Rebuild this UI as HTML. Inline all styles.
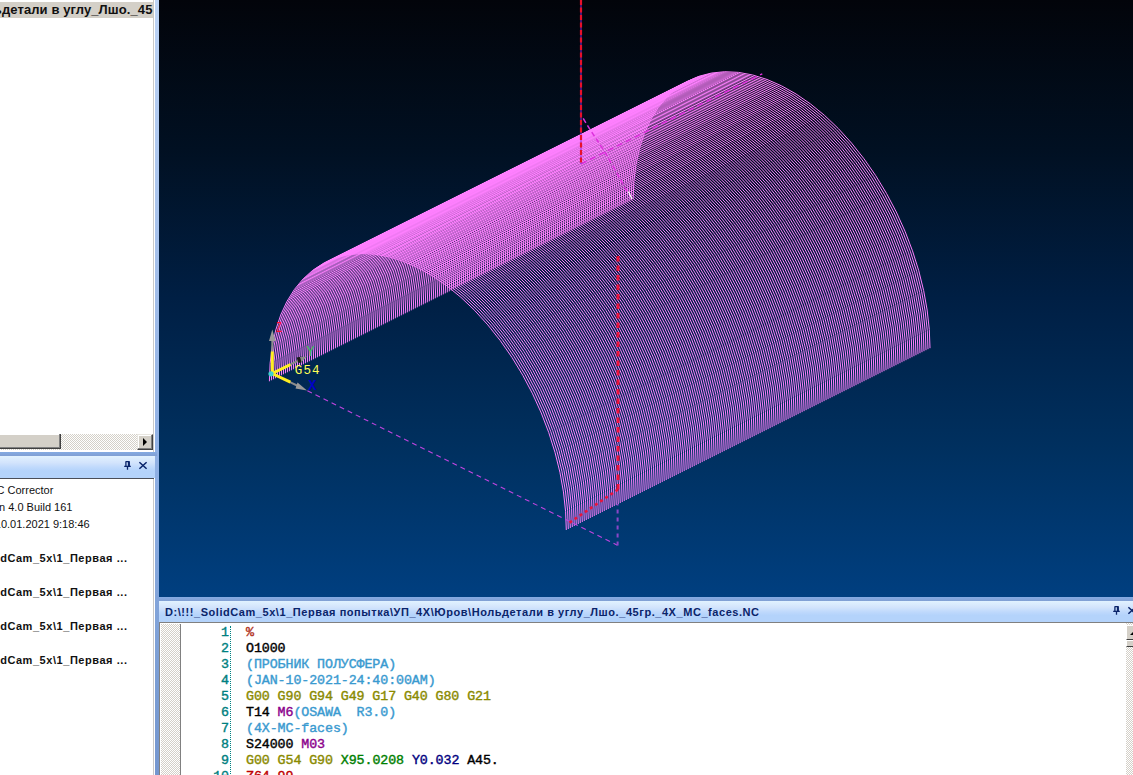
<!DOCTYPE html>
<html><head><meta charset="utf-8"><title>NC Corrector</title>
<style>
html,body{margin:0;padding:0;}
body{width:1133px;height:775px;overflow:hidden;position:relative;background:#fff;font-family:"Liberation Sans","DejaVu Sans",sans-serif;font-size:11px;color:#000;}
.abs{position:absolute;}
#left{left:0;top:0;width:153px;height:775px;background:#fff;}
#lhead{left:0;top:2px;width:153px;height:16px;background:#d4d0c8;overflow:hidden;}
#lhead span{position:absolute;right:0.5px;top:0;font-weight:bold;font-size:13px;line-height:16px;letter-spacing:0.1px;white-space:nowrap;color:#111;}
#lborder{left:153px;top:0;width:1px;height:775px;background:#c9c9c9;}
#vsplit{left:155px;top:0;width:4px;height:775px;background:linear-gradient(#bcd3f5 0%,#aac4ec 27%,#8fb0e4 60%,#789bd2 90%,#7496cf 100%);}
#hscroll{left:0;top:434px;width:153px;height:16px;background-color:#e9e7e2;background-image:conic-gradient(#fff 25%,#d4d0c8 0 50%,#fff 0 75%,#d4d0c8 0);background-size:2px 2px;}
#thumb{left:0;top:0;width:60px;height:14px;background:#d4d0c8;border-right:1px solid #404040;border-bottom:1px solid #404040;box-shadow:inset -1px -1px 0 #808080,inset 0 1px 0 #fff;}
#rbtn{left:137px;top:0;width:14px;height:14px;background:#d4d0c8;border:1px solid;border-color:#e8e6e0 #404040 #404040 #e8e6e0;box-shadow:inset -1px -1px 0 #808080,inset 1px 1px 0 #fff;}
#rbtn:after{content:"";position:absolute;left:5px;top:3px;border-left:4px solid #000;border-top:4px solid transparent;border-bottom:4px solid transparent;}
#hsplit{left:0;top:452px;width:157px;height:4px;z-index:3;background:linear-gradient(#84abe3,#819fd3);}
#phead{left:0;top:456px;width:155px;height:21.6px;z-index:3;background:linear-gradient(#e1f2ff 0%,#d3e4fc 30%,#bfd9fc 52%,#b4d3fb 68%,#b4d3fb 100%);}
#pline{left:0;top:477.5px;width:153.5px;height:1.4px;background:#4a4e58;z-index:3;}
.ptxt{left:0;white-space:nowrap;font-size:11px;line-height:13px;color:#111;}
.pb{font-weight:bold;letter-spacing:0.55px;}
#view{left:159px;top:0;width:974px;height:597px;background:linear-gradient(#02040a 0%,#011022 25%,#001f44 50%,#00305f 75%,#003f80 100%);overflow:hidden;}
#bsplit{left:159px;top:597px;width:974px;height:4px;background:linear-gradient(#84abe3,#819fd3);}
#bhead{left:159px;top:601px;width:974px;height:21px;background:linear-gradient(#e1f2ff 0%,#d3e4fc 30%,#bfd9fc 52%,#b4d3fb 68%,#b4d3fb 100%);}
#btitle{left:6px;top:4px;font-weight:bold;font-size:11px;line-height:14px;letter-spacing:0.555px;color:#0a246a;white-space:nowrap;}
#editor{left:159px;top:622px;width:974px;height:153px;background:#fff;border-top:1px solid #808080;border-left:1px solid #808080;box-sizing:border-box;overflow:hidden;}
#margin{left:1px;top:1px;width:19px;height:153px;background-color:#e9e7e2;background-image:conic-gradient(#fff 25%,#d4d0c8 0 50%,#fff 0 75%,#d4d0c8 0);background-size:2px 2px;border-right:1px solid #808080;}
#dots{left:70px;top:3px;width:0;height:150px;border-left:1px dotted #008080;}
.ln{left:0;width:69px;text-align:right;color:#008080;}
.cl,.ln{font-family:"Liberation Mono","DejaVu Sans Mono",monospace;font-weight:normal;-webkit-text-stroke:0.4px currentColor;letter-spacing:-0.1px;font-size:13.33px;line-height:16px;height:16px;white-space:pre;}
.cl{left:86px;}
.cm{color:#3a9ad0;} .g{color:#8a8a00;} .m{color:#8b008b;} .x{color:#008000;} .y{color:#000080;} .z{color:#c00000;} .p{color:#b03020;}
#vscroll{left:966px;top:0px;width:7px;height:152px;background-color:#e9e7e2;background-image:conic-gradient(#fff 25%,#d4d0c8 0 50%,#fff 0 75%,#d4d0c8 0);background-size:2px 2px;}
#ubtn{left:0;top:2px;width:16px;height:13px;background:#d4d0c8;border-left:1px solid #fff;border-top:1px solid #fff;border-bottom:1px solid #404040;}
#ubtn:after{content:"";position:absolute;left:3px;top:5px;border-bottom:4px solid #000;border-left:4px solid transparent;border-right:4px solid transparent;}
#vthumb{left:0;top:17px;width:16px;height:5px;background:#d4d0c8;border-left:1px solid #fff;border-top:1px solid #fff;border-bottom:1px solid #404040;}
</style></head><body>
<div id="left" class="abs"></div>
<div id="lhead" class="abs"><span>Нольдетали в углу_Лшо._45</span></div>
<div id="hscroll" class="abs"><div id="thumb" class="abs"></div><div id="rbtn" class="abs"></div></div>
<div id="hsplit" class="abs"></div>
<div id="phead" class="abs">
<svg class="abs" style="left:122px;top:4px" width="28" height="12" viewBox="0 0 28 12"><g fill="none" stroke="#0a246a" stroke-width="1.3"><path d="M3.5 1.7h4.2M3.9 1.7v4.6M7.3 1.7v4.6M6.5 1.7v4.6M2.2 6.4h6.6M5.5 6.4v3.4"/><path d="M17.4 2.2l7.2 6.6M24.6 2.2l-7.2 6.6" stroke-width="1.5"/></g></svg>
</div>
<div id="pline" class="abs"></div>
<div class="abs ptxt" style="top:484px;left:-11.4px">NC Corrector</div>
<div class="abs ptxt" style="top:501px;left:-31.5px">Version 4.0 Build 161</div>
<div class="abs ptxt" style="top:518px;left:-5.2px">10.01.2021 9:18:46</div>
<div class="abs ptxt pb" style="top:552px;left:-22.2px">SolidCam_5x\1_Первая ...</div>
<div class="abs ptxt pb" style="top:586px;left:-22.2px">SolidCam_5x\1_Первая ...</div>
<div class="abs ptxt pb" style="top:620px;left:-22.2px">SolidCam_5x\1_Первая ...</div>
<div class="abs ptxt pb" style="top:654px;left:-22.2px">SolidCam_5x\1_Первая ...</div>
<div id="lborder" class="abs"></div>
<div id="vsplit" class="abs"></div>
<div id="view" class="abs">
<svg class="abs" style="left:0;top:0" width="974" height="597" viewBox="0 0 974 597">
<path fill="none" stroke="#ff80ff" stroke-width="1" d="M407.30 530.00a214.39 130.18 65.24 0 0 -148.45 -262.35a214.39 130.18 65.24 0 0 -148.45 113.65M409.30 529.00a214.39 130.18 65.24 0 0 -148.45 -262.35a214.39 130.18 65.24 0 0 -148.45 113.65M411.30 528.00a214.39 130.18 65.24 0 0 -148.45 -262.35a214.39 130.18 65.24 0 0 -148.45 113.65M413.30 527.00a214.39 130.18 65.24 0 0 -148.45 -262.35a214.39 130.18 65.24 0 0 -148.45 113.65M415.29 526.00a214.39 130.18 65.24 0 0 -148.45 -262.35a214.39 130.18 65.24 0 0 -148.45 113.65M417.29 525.01a214.39 130.18 65.24 0 0 -148.45 -262.35a214.39 130.18 65.24 0 0 -148.45 113.65M419.29 524.01a214.39 130.18 65.24 0 0 -148.45 -262.35a214.39 130.18 65.24 0 0 -148.45 113.65M421.29 523.01a214.39 130.18 65.24 0 0 -148.45 -262.35a214.39 130.18 65.24 0 0 -148.45 113.65M423.29 522.01a214.39 130.18 65.24 0 0 -148.45 -262.35a214.39 130.18 65.24 0 0 -148.45 113.65M425.29 521.01a214.39 130.18 65.24 0 0 -148.45 -262.35a214.39 130.18 65.24 0 0 -148.45 113.65M427.28 520.01a214.39 130.18 65.24 0 0 -148.45 -262.35a214.39 130.18 65.24 0 0 -148.45 113.65M429.28 519.01a214.39 130.18 65.24 0 0 -148.45 -262.35a214.39 130.18 65.24 0 0 -148.45 113.65M431.28 518.01a214.39 130.18 65.24 0 0 -148.45 -262.35a214.39 130.18 65.24 0 0 -148.45 113.65M433.28 517.01a214.39 130.18 65.24 0 0 -148.45 -262.35a214.39 130.18 65.24 0 0 -148.45 113.65M435.28 516.02a214.39 130.18 65.24 0 0 -148.45 -262.35a214.39 130.18 65.24 0 0 -148.45 113.65M437.28 515.02a214.39 130.18 65.24 0 0 -148.45 -262.35a214.39 130.18 65.24 0 0 -148.45 113.65M439.27 514.02a214.39 130.18 65.24 0 0 -148.45 -262.35a214.39 130.18 65.24 0 0 -148.45 113.65M441.27 513.02a214.39 130.18 65.24 0 0 -148.45 -262.35a214.39 130.18 65.24 0 0 -148.45 113.65M443.27 512.02a214.39 130.18 65.24 0 0 -148.45 -262.35a214.39 130.18 65.24 0 0 -148.45 113.65M445.27 511.02a214.39 130.18 65.24 0 0 -148.45 -262.35a214.39 130.18 65.24 0 0 -148.45 113.65M447.27 510.02a214.39 130.18 65.24 0 0 -148.45 -262.35a214.39 130.18 65.24 0 0 -148.45 113.65M449.27 509.02a214.39 130.18 65.24 0 0 -148.45 -262.35a214.39 130.18 65.24 0 0 -148.45 113.65M451.26 508.02a214.39 130.18 65.24 0 0 -148.45 -262.35a214.39 130.18 65.24 0 0 -148.45 113.65M453.26 507.03a214.39 130.18 65.24 0 0 -148.45 -262.35a214.39 130.18 65.24 0 0 -148.45 113.65M455.26 506.03a214.39 130.18 65.24 0 0 -148.45 -262.35a214.39 130.18 65.24 0 0 -148.45 113.65M457.26 505.03a214.39 130.18 65.24 0 0 -148.45 -262.35a214.39 130.18 65.24 0 0 -148.45 113.65M459.26 504.03a214.39 130.18 65.24 0 0 -148.45 -262.35a214.39 130.18 65.24 0 0 -148.45 113.65M461.26 503.03a214.39 130.18 65.24 0 0 -148.45 -262.35a214.39 130.18 65.24 0 0 -148.45 113.65M463.25 502.03a214.39 130.18 65.24 0 0 -148.45 -262.35a214.39 130.18 65.24 0 0 -148.45 113.65M465.25 501.03a214.39 130.18 65.24 0 0 -148.45 -262.35a214.39 130.18 65.24 0 0 -148.45 113.65M467.25 500.03a214.39 130.18 65.24 0 0 -148.45 -262.35a214.39 130.18 65.24 0 0 -148.45 113.65M469.25 499.03a214.39 130.18 65.24 0 0 -148.45 -262.35a214.39 130.18 65.24 0 0 -148.45 113.65M471.25 498.04a214.39 130.18 65.24 0 0 -148.45 -262.35a214.39 130.18 65.24 0 0 -148.45 113.65M473.25 497.04a214.39 130.18 65.24 0 0 -148.45 -262.35a214.39 130.18 65.24 0 0 -148.45 113.65M475.24 496.04a214.39 130.18 65.24 0 0 -148.45 -262.35a214.39 130.18 65.24 0 0 -148.45 113.65M477.24 495.04a214.39 130.18 65.24 0 0 -148.45 -262.35a214.39 130.18 65.24 0 0 -148.45 113.65M479.24 494.04a214.39 130.18 65.24 0 0 -148.45 -262.35a214.39 130.18 65.24 0 0 -148.45 113.65M481.24 493.04a214.39 130.18 65.24 0 0 -148.45 -262.35a214.39 130.18 65.24 0 0 -148.45 113.65M483.24 492.04a214.39 130.18 65.24 0 0 -148.45 -262.35a214.39 130.18 65.24 0 0 -148.45 113.65M485.24 491.04a214.39 130.18 65.24 0 0 -148.45 -262.35a214.39 130.18 65.24 0 0 -148.45 113.65M487.23 490.04a214.39 130.18 65.24 0 0 -148.45 -262.35a214.39 130.18 65.24 0 0 -148.45 113.65M489.23 489.05a214.39 130.18 65.24 0 0 -148.45 -262.35a214.39 130.18 65.24 0 0 -148.45 113.65M491.23 488.05a214.39 130.18 65.24 0 0 -148.45 -262.35a214.39 130.18 65.24 0 0 -148.45 113.65M493.23 487.05a214.39 130.18 65.24 0 0 -148.45 -262.35a214.39 130.18 65.24 0 0 -148.45 113.65M495.23 486.05a214.39 130.18 65.24 0 0 -148.45 -262.35a214.39 130.18 65.24 0 0 -148.45 113.65M497.23 485.05a214.39 130.18 65.24 0 0 -148.45 -262.35a214.39 130.18 65.24 0 0 -148.45 113.65M499.22 484.05a214.39 130.18 65.24 0 0 -148.45 -262.35a214.39 130.18 65.24 0 0 -148.45 113.65M501.22 483.05a214.39 130.18 65.24 0 0 -148.45 -262.35a214.39 130.18 65.24 0 0 -148.45 113.65M503.22 482.05a214.39 130.18 65.24 0 0 -148.45 -262.35a214.39 130.18 65.24 0 0 -148.45 113.65M505.22 481.05a214.39 130.18 65.24 0 0 -148.45 -262.35a214.39 130.18 65.24 0 0 -148.45 113.65M507.22 480.05a214.39 130.18 65.24 0 0 -148.45 -262.35a214.39 130.18 65.24 0 0 -148.45 113.65M509.22 479.06a214.39 130.18 65.24 0 0 -148.45 -262.35a214.39 130.18 65.24 0 0 -148.45 113.65M511.21 478.06a214.39 130.18 65.24 0 0 -148.45 -262.35a214.39 130.18 65.24 0 0 -148.45 113.65M513.21 477.06a214.39 130.18 65.24 0 0 -148.45 -262.35a214.39 130.18 65.24 0 0 -148.45 113.65M515.21 476.06a214.39 130.18 65.24 0 0 -148.45 -262.35a214.39 130.18 65.24 0 0 -148.45 113.65M517.21 475.06a214.39 130.18 65.24 0 0 -148.45 -262.35a214.39 130.18 65.24 0 0 -148.45 113.65M519.21 474.06a214.39 130.18 65.24 0 0 -148.45 -262.35a214.39 130.18 65.24 0 0 -148.45 113.65M521.21 473.06a214.39 130.18 65.24 0 0 -148.45 -262.35a214.39 130.18 65.24 0 0 -148.45 113.65M523.20 472.06a214.39 130.18 65.24 0 0 -148.45 -262.35a214.39 130.18 65.24 0 0 -148.45 113.65M525.20 471.06a214.39 130.18 65.24 0 0 -148.45 -262.35a214.39 130.18 65.24 0 0 -148.45 113.65M527.20 470.07a214.39 130.18 65.24 0 0 -148.45 -262.35a214.39 130.18 65.24 0 0 -148.45 113.65M529.20 469.07a214.39 130.18 65.24 0 0 -148.45 -262.35a214.39 130.18 65.24 0 0 -148.45 113.65M531.20 468.07a214.39 130.18 65.24 0 0 -148.45 -262.35a214.39 130.18 65.24 0 0 -148.45 113.65M533.20 467.07a214.39 130.18 65.24 0 0 -148.45 -262.35a214.39 130.18 65.24 0 0 -148.45 113.65M535.19 466.07a214.39 130.18 65.24 0 0 -148.45 -262.35a214.39 130.18 65.24 0 0 -148.45 113.65M537.19 465.07a214.39 130.18 65.24 0 0 -148.45 -262.35a214.39 130.18 65.24 0 0 -148.45 113.65M539.19 464.07a214.39 130.18 65.24 0 0 -148.45 -262.35a214.39 130.18 65.24 0 0 -148.45 113.65M541.19 463.07a214.39 130.18 65.24 0 0 -148.45 -262.35a214.39 130.18 65.24 0 0 -148.45 113.65M543.19 462.07a214.39 130.18 65.24 0 0 -148.45 -262.35a214.39 130.18 65.24 0 0 -148.45 113.65M545.19 461.08a214.39 130.18 65.24 0 0 -148.45 -262.35a214.39 130.18 65.24 0 0 -148.45 113.65M547.18 460.08a214.39 130.18 65.24 0 0 -148.45 -262.35a214.39 130.18 65.24 0 0 -148.45 113.65M549.18 459.08a214.39 130.18 65.24 0 0 -148.45 -262.35a214.39 130.18 65.24 0 0 -148.45 113.65M551.18 458.08a214.39 130.18 65.24 0 0 -148.45 -262.35a214.39 130.18 65.24 0 0 -148.45 113.65M553.18 457.08a214.39 130.18 65.24 0 0 -148.45 -262.35a214.39 130.18 65.24 0 0 -148.45 113.65M555.18 456.08a214.39 130.18 65.24 0 0 -148.45 -262.35a214.39 130.18 65.24 0 0 -148.45 113.65M557.18 455.08a214.39 130.18 65.24 0 0 -148.45 -262.35a214.39 130.18 65.24 0 0 -148.45 113.65M559.17 454.08a214.39 130.18 65.24 0 0 -148.45 -262.35a214.39 130.18 65.24 0 0 -148.45 113.65M561.17 453.08a214.39 130.18 65.24 0 0 -148.45 -262.35a214.39 130.18 65.24 0 0 -148.45 113.65M563.17 452.09a214.39 130.18 65.24 0 0 -148.45 -262.35a214.39 130.18 65.24 0 0 -148.45 113.65M565.17 451.09a214.39 130.18 65.24 0 0 -148.45 -262.35a214.39 130.18 65.24 0 0 -148.45 113.65M567.17 450.09a214.39 130.18 65.24 0 0 -148.45 -262.35a214.39 130.18 65.24 0 0 -148.45 113.65M569.17 449.09a214.39 130.18 65.24 0 0 -148.45 -262.35a214.39 130.18 65.24 0 0 -148.45 113.65M571.16 448.09a214.39 130.18 65.24 0 0 -148.45 -262.35a214.39 130.18 65.24 0 0 -148.45 113.65M573.16 447.09a214.39 130.18 65.24 0 0 -148.45 -262.35a214.39 130.18 65.24 0 0 -148.45 113.65M575.16 446.09a214.39 130.18 65.24 0 0 -148.45 -262.35a214.39 130.18 65.24 0 0 -148.45 113.65M577.16 445.09a214.39 130.18 65.24 0 0 -148.45 -262.35a214.39 130.18 65.24 0 0 -148.45 113.65M579.16 444.09a214.39 130.18 65.24 0 0 -148.45 -262.35a214.39 130.18 65.24 0 0 -148.45 113.65M581.16 443.10a214.39 130.18 65.24 0 0 -148.45 -262.35a214.39 130.18 65.24 0 0 -148.45 113.65M583.15 442.10a214.39 130.18 65.24 0 0 -148.45 -262.35a214.39 130.18 65.24 0 0 -148.45 113.65M585.15 441.10a214.39 130.18 65.24 0 0 -148.45 -262.35a214.39 130.18 65.24 0 0 -148.45 113.65M587.15 440.10a214.39 130.18 65.24 0 0 -148.45 -262.35a214.39 130.18 65.24 0 0 -148.45 113.65M589.15 439.10a214.39 130.18 65.24 0 0 -148.45 -262.35a214.39 130.18 65.24 0 0 -148.45 113.65M591.15 438.10a214.39 130.18 65.24 0 0 -148.45 -262.35a214.39 130.18 65.24 0 0 -148.45 113.65M593.15 437.10a214.39 130.18 65.24 0 0 -148.45 -262.35a214.39 130.18 65.24 0 0 -148.45 113.65M595.15 436.10a214.39 130.18 65.24 0 0 -148.45 -262.35a214.39 130.18 65.24 0 0 -148.45 113.65M597.14 435.10a214.39 130.18 65.24 0 0 -148.45 -262.35a214.39 130.18 65.24 0 0 -148.45 113.65M599.14 434.11a214.39 130.18 65.24 0 0 -148.45 -262.35a214.39 130.18 65.24 0 0 -148.45 113.65M601.14 433.11a214.39 130.18 65.24 0 0 -148.45 -262.35a214.39 130.18 65.24 0 0 -148.45 113.65M603.14 432.11a214.39 130.18 65.24 0 0 -148.45 -262.35a214.39 130.18 65.24 0 0 -148.45 113.65M605.14 431.11a214.39 130.18 65.24 0 0 -148.45 -262.35a214.39 130.18 65.24 0 0 -148.45 113.65M607.14 430.11a214.39 130.18 65.24 0 0 -148.45 -262.35a214.39 130.18 65.24 0 0 -148.45 113.65M609.13 429.11a214.39 130.18 65.24 0 0 -148.45 -262.35a214.39 130.18 65.24 0 0 -148.45 113.65M611.13 428.11a214.39 130.18 65.24 0 0 -148.45 -262.35a214.39 130.18 65.24 0 0 -148.45 113.65M613.13 427.11a214.39 130.18 65.24 0 0 -148.45 -262.35a214.39 130.18 65.24 0 0 -148.45 113.65M615.13 426.11a214.39 130.18 65.24 0 0 -148.45 -262.35a214.39 130.18 65.24 0 0 -148.45 113.65M617.13 425.12a214.39 130.18 65.24 0 0 -148.45 -262.35a214.39 130.18 65.24 0 0 -148.45 113.65M619.13 424.12a214.39 130.18 65.24 0 0 -148.45 -262.35a214.39 130.18 65.24 0 0 -148.45 113.65M621.12 423.12a214.39 130.18 65.24 0 0 -148.45 -262.35a214.39 130.18 65.24 0 0 -148.45 113.65M623.12 422.12a214.39 130.18 65.24 0 0 -148.45 -262.35a214.39 130.18 65.24 0 0 -148.45 113.65M625.12 421.12a214.39 130.18 65.24 0 0 -148.45 -262.35a214.39 130.18 65.24 0 0 -148.45 113.65M627.12 420.12a214.39 130.18 65.24 0 0 -148.45 -262.35a214.39 130.18 65.24 0 0 -148.45 113.65M629.12 419.12a214.39 130.18 65.24 0 0 -148.45 -262.35a214.39 130.18 65.24 0 0 -148.45 113.65M631.12 418.12a214.39 130.18 65.24 0 0 -148.45 -262.35a214.39 130.18 65.24 0 0 -148.45 113.65M633.11 417.12a214.39 130.18 65.24 0 0 -148.45 -262.35a214.39 130.18 65.24 0 0 -148.45 113.65M635.11 416.13a214.39 130.18 65.24 0 0 -148.45 -262.35a214.39 130.18 65.24 0 0 -148.45 113.65M637.11 415.13a214.39 130.18 65.24 0 0 -148.45 -262.35a214.39 130.18 65.24 0 0 -148.45 113.65M639.11 414.13a214.39 130.18 65.24 0 0 -148.45 -262.35a214.39 130.18 65.24 0 0 -148.45 113.65M641.11 413.13a214.39 130.18 65.24 0 0 -148.45 -262.35a214.39 130.18 65.24 0 0 -148.45 113.65M643.11 412.13a214.39 130.18 65.24 0 0 -148.45 -262.35a214.39 130.18 65.24 0 0 -148.45 113.65M645.10 411.13a214.39 130.18 65.24 0 0 -148.45 -262.35a214.39 130.18 65.24 0 0 -148.45 113.65M647.10 410.13a214.39 130.18 65.24 0 0 -148.45 -262.35a214.39 130.18 65.24 0 0 -148.45 113.65M649.10 409.13a214.39 130.18 65.24 0 0 -148.45 -262.35a214.39 130.18 65.24 0 0 -148.45 113.65M651.10 408.13a214.39 130.18 65.24 0 0 -148.45 -262.35a214.39 130.18 65.24 0 0 -148.45 113.65M653.10 407.14a214.39 130.18 65.24 0 0 -148.45 -262.35a214.39 130.18 65.24 0 0 -148.45 113.65M655.10 406.14a214.39 130.18 65.24 0 0 -148.45 -262.35a214.39 130.18 65.24 0 0 -148.45 113.65M657.09 405.14a214.39 130.18 65.24 0 0 -148.45 -262.35a214.39 130.18 65.24 0 0 -148.45 113.65M659.09 404.14a214.39 130.18 65.24 0 0 -148.45 -262.35a214.39 130.18 65.24 0 0 -148.45 113.65M661.09 403.14a214.39 130.18 65.24 0 0 -148.45 -262.35a214.39 130.18 65.24 0 0 -148.45 113.65M663.09 402.14a214.39 130.18 65.24 0 0 -148.45 -262.35a214.39 130.18 65.24 0 0 -148.45 113.65M665.09 401.14a214.39 130.18 65.24 0 0 -148.45 -262.35a214.39 130.18 65.24 0 0 -148.45 113.65M667.09 400.14a214.39 130.18 65.24 0 0 -148.45 -262.35a214.39 130.18 65.24 0 0 -148.45 113.65M669.08 399.14a214.39 130.18 65.24 0 0 -148.45 -262.35a214.39 130.18 65.24 0 0 -148.45 113.65M671.08 398.15a214.39 130.18 65.24 0 0 -148.45 -262.35a214.39 130.18 65.24 0 0 -148.45 113.65M673.08 397.15a214.39 130.18 65.24 0 0 -148.45 -262.35a214.39 130.18 65.24 0 0 -148.45 113.65M675.08 396.15a214.39 130.18 65.24 0 0 -148.45 -262.35a214.39 130.18 65.24 0 0 -148.45 113.65M677.08 395.15a214.39 130.18 65.24 0 0 -148.45 -262.35a214.39 130.18 65.24 0 0 -148.45 113.65M679.08 394.15a214.39 130.18 65.24 0 0 -148.45 -262.35a214.39 130.18 65.24 0 0 -148.45 113.65M681.07 393.15a214.39 130.18 65.24 0 0 -148.45 -262.35a214.39 130.18 65.24 0 0 -148.45 113.65M683.07 392.15a214.39 130.18 65.24 0 0 -148.45 -262.35a214.39 130.18 65.24 0 0 -148.45 113.65M685.07 391.15a214.39 130.18 65.24 0 0 -148.45 -262.35a214.39 130.18 65.24 0 0 -148.45 113.65M687.07 390.15a214.39 130.18 65.24 0 0 -148.45 -262.35a214.39 130.18 65.24 0 0 -148.45 113.65M689.07 389.15a214.39 130.18 65.24 0 0 -148.45 -262.35a214.39 130.18 65.24 0 0 -148.45 113.65M691.07 388.16a214.39 130.18 65.24 0 0 -148.45 -262.35a214.39 130.18 65.24 0 0 -148.45 113.65M693.06 387.16a214.39 130.18 65.24 0 0 -148.45 -262.35a214.39 130.18 65.24 0 0 -148.45 113.65M695.06 386.16a214.39 130.18 65.24 0 0 -148.45 -262.35a214.39 130.18 65.24 0 0 -148.45 113.65M697.06 385.16a214.39 130.18 65.24 0 0 -148.45 -262.35a214.39 130.18 65.24 0 0 -148.45 113.65M699.06 384.16a214.39 130.18 65.24 0 0 -148.45 -262.35a214.39 130.18 65.24 0 0 -148.45 113.65M701.06 383.16a214.39 130.18 65.24 0 0 -148.45 -262.35a214.39 130.18 65.24 0 0 -148.45 113.65M703.06 382.16a214.39 130.18 65.24 0 0 -148.45 -262.35a214.39 130.18 65.24 0 0 -148.45 113.65M705.05 381.16a214.39 130.18 65.24 0 0 -148.45 -262.35a214.39 130.18 65.24 0 0 -148.45 113.65M707.05 380.16a214.39 130.18 65.24 0 0 -148.45 -262.35a214.39 130.18 65.24 0 0 -148.45 113.65M709.05 379.17a214.39 130.18 65.24 0 0 -148.45 -262.35a214.39 130.18 65.24 0 0 -148.45 113.65M711.05 378.17a214.39 130.18 65.24 0 0 -148.45 -262.35a214.39 130.18 65.24 0 0 -148.45 113.65M713.05 377.17a214.39 130.18 65.24 0 0 -148.45 -262.35a214.39 130.18 65.24 0 0 -148.45 113.65M715.05 376.17a214.39 130.18 65.24 0 0 -148.45 -262.35a214.39 130.18 65.24 0 0 -148.45 113.65M717.04 375.17a214.39 130.18 65.24 0 0 -148.45 -262.35a214.39 130.18 65.24 0 0 -148.45 113.65M719.04 374.17a214.39 130.18 65.24 0 0 -148.45 -262.35a214.39 130.18 65.24 0 0 -148.45 113.65M721.04 373.17a214.39 130.18 65.24 0 0 -148.45 -262.35a214.39 130.18 65.24 0 0 -148.45 113.65M723.04 372.17a214.39 130.18 65.24 0 0 -148.45 -262.35a214.39 130.18 65.24 0 0 -148.45 113.65M725.04 371.17a214.39 130.18 65.24 0 0 -148.45 -262.35a214.39 130.18 65.24 0 0 -148.45 113.65M727.04 370.18a214.39 130.18 65.24 0 0 -148.45 -262.35a214.39 130.18 65.24 0 0 -148.45 113.65M729.03 369.18a214.39 130.18 65.24 0 0 -148.45 -262.35a214.39 130.18 65.24 0 0 -148.45 113.65M731.03 368.18a214.39 130.18 65.24 0 0 -148.45 -262.35a214.39 130.18 65.24 0 0 -148.45 113.65M733.03 367.18a214.39 130.18 65.24 0 0 -148.45 -262.35a214.39 130.18 65.24 0 0 -148.45 113.65M735.03 366.18a214.39 130.18 65.24 0 0 -148.45 -262.35a214.39 130.18 65.24 0 0 -148.45 113.65M737.03 365.18a214.39 130.18 65.24 0 0 -148.45 -262.35a214.39 130.18 65.24 0 0 -148.45 113.65M739.03 364.18a214.39 130.18 65.24 0 0 -148.45 -262.35a214.39 130.18 65.24 0 0 -148.45 113.65M741.02 363.18a214.39 130.18 65.24 0 0 -148.45 -262.35a214.39 130.18 65.24 0 0 -148.45 113.65M743.02 362.18a214.39 130.18 65.24 0 0 -148.45 -262.35a214.39 130.18 65.24 0 0 -148.45 113.65M745.02 361.19a214.39 130.18 65.24 0 0 -148.45 -262.35a214.39 130.18 65.24 0 0 -148.45 113.65M747.02 360.19a214.39 130.18 65.24 0 0 -148.45 -262.35a214.39 130.18 65.24 0 0 -148.45 113.65M749.02 359.19a214.39 130.18 65.24 0 0 -148.45 -262.35a214.39 130.18 65.24 0 0 -148.45 113.65M751.02 358.19a214.39 130.18 65.24 0 0 -148.45 -262.35a214.39 130.18 65.24 0 0 -148.45 113.65M753.01 357.19a214.39 130.18 65.24 0 0 -148.45 -262.35a214.39 130.18 65.24 0 0 -148.45 113.65M755.01 356.19a214.39 130.18 65.24 0 0 -148.45 -262.35a214.39 130.18 65.24 0 0 -148.45 113.65M757.01 355.19a214.39 130.18 65.24 0 0 -148.45 -262.35a214.39 130.18 65.24 0 0 -148.45 113.65M759.01 354.19a214.39 130.18 65.24 0 0 -148.45 -262.35a214.39 130.18 65.24 0 0 -148.45 113.65M761.01 353.19a214.39 130.18 65.24 0 0 -148.45 -262.35a214.39 130.18 65.24 0 0 -148.45 113.65M763.01 352.20a214.39 130.18 65.24 0 0 -148.45 -262.35a214.39 130.18 65.24 0 0 -148.45 113.65M765.00 351.20a214.39 130.18 65.24 0 0 -148.45 -262.35a214.39 130.18 65.24 0 0 -148.45 113.65M767.00 350.20a214.39 130.18 65.24 0 0 -148.45 -262.35a214.39 130.18 65.24 0 0 -148.45 113.65M769.00 349.20a214.39 130.18 65.24 0 0 -148.45 -262.35a214.39 130.18 65.24 0 0 -148.45 113.65M771.00 348.20a214.39 130.18 65.24 0 0 -148.45 -262.35a214.39 130.18 65.24 0 0 -148.45 113.65"/>
<g fill="none" transform="translate(-159,0)">
<path d="M307.4 390.8L617.4 545.2" stroke="#c044e0" stroke-width="1.1" stroke-dasharray="5 4"/><path d="M617.6 545.5V504" stroke="#8a46c8" stroke-width="2" stroke-dasharray="4 4"/>
<path d="M581 164L762.3 73.8" stroke="#dc30dc" stroke-width="1.5" stroke-dasharray="6 4"/>
<path d="M583.2 118.3Q590 130 597 140T614 168T628 193" stroke="#dc30dc" stroke-width="1.5" stroke-dasharray="5 3"/>
<path d="M628.3 191.5L632 199" stroke="#fff" stroke-width="1.2"/>
<path d="M581 0V164" stroke="#8a2be2" stroke-width="1"/>
<path d="M581 0V164" stroke="#e8102a" stroke-width="2.2" stroke-dasharray="5 2.5"/>
<path d="M618 256V490" stroke="#e8143c" stroke-width="3" stroke-dasharray="5.5 4"/><path d="M618 489.5L569 523" stroke="#e8143c" stroke-width="2.6" stroke-dasharray="3 3.2"/>
<!-- axis icon -->
<g stroke-linecap="butt">
<path d="M272.3 352V336" stroke="#8c8c8c" stroke-width="2"/>
<path d="M272.3 329.5L275.6 341H269z" fill="#9a9a9a" stroke="none"/>
<path d="M290 364.6L299 360.3" stroke="#8c8c8c" stroke-width="2"/>
<path d="M296.5 357.5L302.5 356.5L301.5 362.5L298.5 363z" fill="#1c1c1c" stroke="none"/>
<path d="M307 356.5L300 357L301.5 362z" fill="#8a8a8a" stroke="none"/>
<path d="M290 382.2L298 386" stroke="#8c8c8c" stroke-width="2"/>
<path d="M307 390.5L297.5 382.5L295.5 388.5z" fill="#9a9a9a" stroke="none"/>
<path d="M272.3 374V351.5" stroke="#ffee22" stroke-width="3"/>
<path d="M272 373.5L290.4 364.6" stroke="#ffee22" stroke-width="3"/>
<path d="M272 373.5L290.4 382.2" stroke="#ffee22" stroke-width="3"/>
<circle cx="271" cy="373.8" r="2.6" fill="#3fd0d0" stroke="none"/>
</g>
</g>
<g font-family="'Liberation Mono','DejaVu Sans Mono',monospace" transform="translate(-159,0)">
<text x="276" y="331.5" font-size="14.5" fill="#ff1030" textLength="5.8" lengthAdjust="spacingAndGlyphs">Z</text>
<text x="306.2" y="355.7" font-size="14.5" fill="#3fbf5f" textLength="8.4" lengthAdjust="spacingAndGlyphs">Y</text>
<text x="308.2" y="389.8" font-size="14.5" font-weight="bold" fill="#0000c8" textLength="8.2" lengthAdjust="spacingAndGlyphs">X</text>
<text x="294.8" y="373.8" font-size="12.5" fill="#ffff55" textLength="24.8" lengthAdjust="spacing">G54</text>
</g>

</svg>
</div>
<div id="bsplit" class="abs"></div>
<div id="bhead" class="abs"><div id="btitle" class="abs">D:\!!!_SolidCam_5x\1_Первая попытка\УП_4Х\Юров\Нольдетали в углу_Лшо._45гр._4X_MC_faces.NC</div>
<svg class="abs" style="left:952px;top:4px" width="22" height="12" viewBox="0 0 22 12"><g fill="none" stroke="#0a246a" stroke-width="1.3"><path d="M3.5 1.7h4.2M3.9 1.7v4.6M7.3 1.7v4.6M6.5 1.7v4.6M2.2 6.4h6.6M5.5 6.4v3.4"/><path d="M17.4 2.2l7.2 6.6M24.6 2.2l-7.2 6.6" stroke-width="1.5"/></g></svg>
</div>
<div id="editor" class="abs">
<div id="margin" class="abs"></div>
<div id="dots" class="abs"></div>
<div class="abs ln" style="top:2px">1</div><div class="abs cl" style="top:2px"><span class="p">%</span></div>
<div class="abs ln" style="top:18px">2</div><div class="abs cl" style="top:18px">O1000</div>
<div class="abs ln" style="top:34px">3</div><div class="abs cl" style="top:34px"><span class="cm">(ПРОБНИК ПОЛУСФЕРА)</span></div>
<div class="abs ln" style="top:50px">4</div><div class="abs cl" style="top:50px"><span class="cm">(JAN-10-2021-24:40:00AM)</span></div>
<div class="abs ln" style="top:66px">5</div><div class="abs cl" style="top:66px"><span class="g">G00 G90 G94 G49 G17 G40 G80 G21</span></div>
<div class="abs ln" style="top:82px">6</div><div class="abs cl" style="top:82px">T14 <span class="m">M6</span><span class="cm">(OSAWA  R3.0)</span></div>
<div class="abs ln" style="top:98px">7</div><div class="abs cl" style="top:98px"><span class="cm">(4X-MC-faces)</span></div>
<div class="abs ln" style="top:114px">8</div><div class="abs cl" style="top:114px">S24000 <span class="m">M03</span></div>
<div class="abs ln" style="top:130px">9</div><div class="abs cl" style="top:130px"><span class="g">G00 G54 G90</span> <span class="x">X95.0208</span> <span class="y">Y0.032</span> A45.</div>
<div class="abs ln" style="top:146px">10</div><div class="abs cl" style="top:146px"><span class="z">Z64.99</span></div>

<div id="vscroll" class="abs"><div id="ubtn" class="abs"></div><div id="vthumb" class="abs"></div></div>
</div>
</body></html>
